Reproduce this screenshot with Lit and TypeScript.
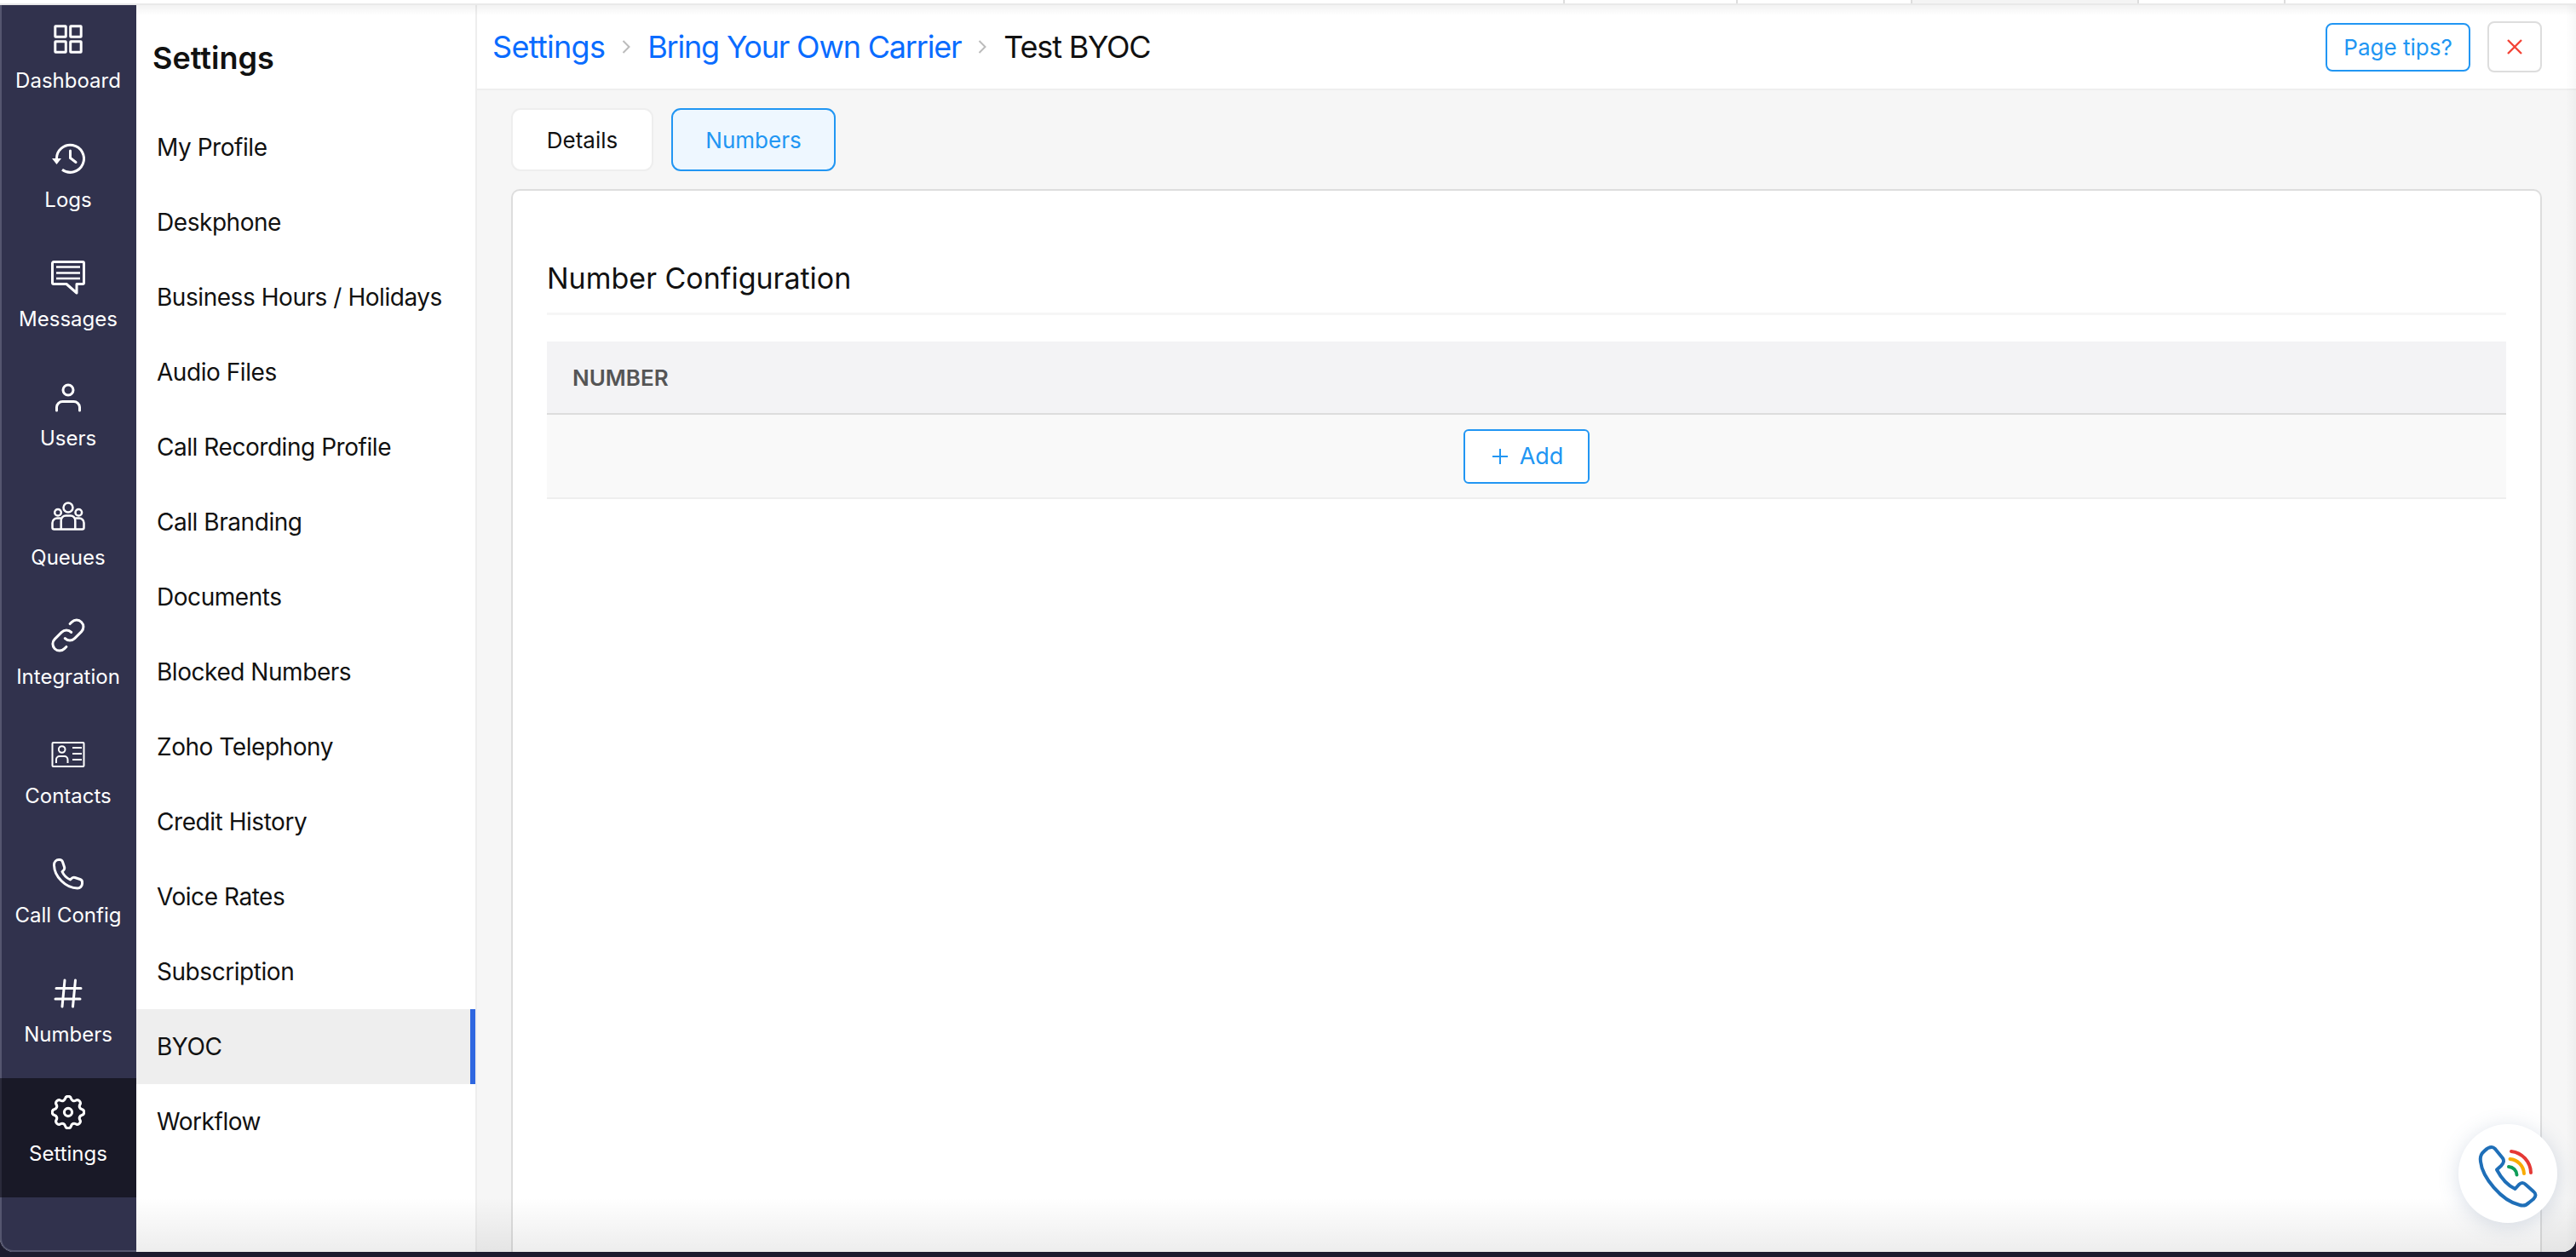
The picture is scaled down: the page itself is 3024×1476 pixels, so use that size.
import { LitElement, html, css, svg } from "lit";
import { customElement } from "lit/decorators.js";
import { classMap } from "lit/directives/class-map.js";

const railIcons = {
  dashboard: svg`<svg viewBox="0 0 40 40" fill="none" stroke="#fff" stroke-width="3">
    <rect x="4.8" y="4.8" width="12.5" height="12.5" rx=".5" /><rect x="22.7" y="4.8" width="12.5" height="12.5" rx=".5" />
    <rect x="4.8" y="22.7" width="12.5" height="12.5" rx=".5" /><rect x="22.7" y="22.7" width="12.5" height="12.5" rx=".5" />
  </svg>`,
  logs: svg`<svg viewBox="0 0 40 40" fill="none" stroke="#fff" stroke-width="3">
    <path d="M6.5 21A16 16 0 1 1 13 33.2" /><path d="M22.5 11v8.5l6.5 5" stroke-linecap="round" />
    <path d="M1 20h11l-5.5 7z" fill="#fff" stroke="none" />
  </svg>`,
  messages: svg`<svg viewBox="0 0 40 40" fill="none" stroke="#fff" stroke-width="3" stroke-linejoin="round">
    <path d="M3 1.5h34a1.5 1.5 0 0 1 1.5 1.5v23a1.5 1.5 0 0 1-1.5 1.5h-7V38L18 27.500H3A1.500 1.500 0 0 1 1.500 26V3A1.500 1.500 0 0 1 3 1.500z" />
    <path d="M6 7.500h28M6 14.500h28M6 21h28" stroke-width="2.400" />
  </svg>`,
  users: svg`<svg viewBox="0 0 40 40" fill="none" stroke="#fff" stroke-width="3" stroke-linecap="round">
    <circle cx="20" cy="12" r="6" /><path d="M6.500 36v-4a7 7 0 0 1 7-6.500h13a7 7 0 0 1 7 6.500v4" />
  </svg>`,
  queues: svg`<svg viewBox="0 0 40 40" fill="none" stroke="#fff" stroke-width="2.500">
    <circle cx="20" cy="10" r="5.500" /><circle cx="8" cy="15.700" r="3.800" /><circle cx="32.300" cy="15.700" r="3.800" />
    <path d="M11.700 35.500V25a5.500 5.500 0 0 1 5.500-5.500h5.600a5.500 5.500 0 0 1 5.500 5.500v10.500" />
    <path d="M11.700 22.500H7A5.500 5.500 0 0 0 1.500 28v5.500a2 2 0 0 0 2 2h33a2 2 0 0 0 2-2V28a5.500 5.500 0 0 0-5.500-5.500h-4.700" />
  </svg>`,
  integration: svg`<svg viewBox="2 2 20 20" fill="none" stroke="#fff" stroke-width="1.500" stroke-linecap="round" stroke-linejoin="round">
    <path d="M13.828 10.172a4 4 0 0 0-5.656 0l-4 4a4 4 0 1 0 5.656 5.656l1.102-1.101m-.758-4.899a4 4 0 0 0 5.656 0l4-4a4 4 0 0 0-5.656-5.656l-1.100 1.100" />
  </svg>`,
  contacts: svg`<svg viewBox="0 0 40 40" fill="none" stroke="#fff" stroke-width="2">
    <rect x="1.500" y="6" width="37" height="28" rx="1" />
    <circle cx="12.700" cy="14" r="3.800" /><path d="M6 30v-4a4 4 0 0 1 4-4h5.500a4 4 0 0 1 4 4v4" />
    <path d="M25 12h11M25 19h11M25 26h11" />
  </svg>`,
  callConfig: svg`<svg viewBox="0 0 40 40" fill="none" stroke="#fff" stroke-width="3" stroke-linejoin="round">
    <path d="M9 3.500C6 3.500 3.500 6 3.500 9.500 3.500 23 17 37 31 37c3 0 5.500-2.500 5.500-5.500v-2c0-1.500-1-2.500-2.500-3l-6-2c-1.500-.5-3 0-4 1L22.500 27C18 25 15 22 13 17.500l1.500-1.500c1-1 1.500-2.500 1-4l-2-6c-.5-1.500-2-2.500-3.500-2.500z" />
  </svg>`,
  numbers: svg`<svg viewBox="0 0 40 40" fill="none" stroke="#fff" stroke-width="3" stroke-linecap="round">
    <path d="M6 14.500h29M5 27h29M16 5l-3 31M28.500 5l-3 31" />
  </svg>`,
  settings: svg`<svg viewBox="2.400 2.400 19.200 19.200" fill="none" stroke="#fff" stroke-width="1.500" stroke-linecap="round" stroke-linejoin="round">
    <path d="M10.325 4.317c.426-1.756 2.924-1.756 3.350 0a1.724 1.724 0 0 0 2.573 1.066c1.543-.94 3.310.826 2.370 2.370a1.724 1.724 0 0 0 1.065 2.572c1.756.426 1.756 2.924 0 3.350a1.724 1.724 0 0 0-1.066 2.573c.94 1.543-.826 3.310-2.370 2.370a1.724 1.724 0 0 0-2.572 1.065c-.426 1.756-2.924 1.756-3.350 0a1.724 1.724 0 0 0-2.573-1.066c-1.543.94-3.310-.826-2.370-2.370a1.724 1.724 0 0 0-1.065-2.572c-1.756-.426-1.756-2.924 0-3.350a1.724 1.724 0 0 0 1.066-2.573c-.94-1.543.826-3.310 2.370-2.370.996.608 2.296.07 2.572-1.065z" />
    <circle cx="12" cy="12" r="2.200" />
  </svg>`,
};

const railItems = [
  { label: "Dashboard", icon: railIcons.dashboard },
  { label: "Logs", icon: railIcons.logs },
  { label: "Messages", icon: railIcons.messages },
  { label: "Users", icon: railIcons.users },
  { label: "Queues", icon: railIcons.queues },
  { label: "Integration", icon: railIcons.integration },
  { label: "Contacts", icon: railIcons.contacts },
  { label: "Call Config", icon: railIcons.callConfig },
  { label: "Numbers", icon: railIcons.numbers },
  { label: "Settings", icon: railIcons.settings, active: true },
];

const menuItems = [
  "My Profile",
  "Deskphone",
  "Business Hours / Holidays",
  "Audio Files",
  "Call Recording Profile",
  "Call Branding",
  "Documents",
  "Blocked Numbers",
  "Zoho Telephony",
  "Credit History",
  "Voice Rates",
  "Subscription",
  "BYOC",
  "Workflow",
];

// widths of the browser tabs peeking in at the very top
const topTabs = [1837, 203, 205, 266, 172, 341];

const chevron = svg`<svg class="chevron" viewBox="0 0 10 16" fill="none" stroke="#bbb" stroke-width="2"><path d="M1.500 1l7 7-7 7" /></svg>`;

@customElement("app-root")
export class AppRoot extends LitElement {
  static styles = css`
    :host {
      display: block;
      width: 3024px;
      height: 1476px;
      overflow: hidden;
      background: #1c1b2e;
      font-family: Inter, "Noto Sans", sans-serif;
      color: #111;
    }
    .top-strip {
      display: flex;
      height: 4px;
      background: #fff;
      border-bottom: 2px solid #e9e9e9;
    }
    .top-tab {
      flex: none;
      border-right: 2px solid #ddd;
      box-sizing: border-box;
    }
    .top-tab.shaded {
      background: #f4f4f4;
    }
    .top-tab.last {
      flex: 1;
      border-right: none;
    }
    .window {
      position: relative;
      display: flex;
      height: 1464px;
      overflow: hidden;
      border-bottom-left-radius: 16px;
      border-bottom-right-radius: 16px;
      background: #fff;
    }
    .rail {
      flex: none;
      width: 160px;
      background: #31324d;
      box-shadow: inset 2px 0 0 #55566f, inset 0 -2px 0 #55566f;
      border-bottom-left-radius: 16px;
    }
    .rail-item {
      display: flex;
      flex-direction: column;
      align-items: center;
      box-sizing: border-box;
      height: 140px;
      padding-top: 20px;
      color: #fff;
      font-size: 24px;
      line-height: 30px;
    }
    .rail-item.active {
      background: #191927;
      box-shadow: inset 2px 0 0 #2a2a3a;
    }
    .rail-icon {
      width: 40px;
      height: 40px;
      margin-bottom: 14px;
    }
    .rail-icon svg {
      display: block;
      width: 40px;
      height: 40px;
    }
    .panel {
      flex: none;
      width: 398px;
      border-right: 2px solid #eeeeee;
      background: #fff;
    }
    .panel-title {
      height: 123px;
      box-sizing: border-box;
      padding: 42px 0 0 19px;
      font-size: 36px;
      font-weight: 600;
      line-height: 40px;
    }
    .menu-item {
      display: flex;
      align-items: center;
      box-sizing: border-box;
      height: 88px;
      padding-left: 24px;
      font-size: 28px;
      letter-spacing: -0.45px;
    }
    .menu-item.active {
      background: #eeeeee;
      border-right: 6px solid #2f67e0;
    }
    .main {
      flex: 1;
      display: flex;
      flex-direction: column;
      min-width: 0;
      background: #f6f6f6;
    }
    .header {
      flex: none;
      display: flex;
      align-items: center;
      height: 98px;
      padding: 0 40px 0 18px;
      background: #fff;
      border-bottom: 2px solid #eeeeee;
    }
    .crumbs {
      flex: 1;
      display: flex;
      align-items: center;
      gap: 20px;
      font-size: 36px;
      letter-spacing: -1.2px;
    }
    .crumbs a {
      color: #0a6cff;
    }
    .crumbs a:first-child {
      letter-spacing: -0.7px;
    }
    .chevron {
      width: 10px;
      height: 16px;
    }
    .tips {
      box-sizing: border-box;
      height: 57px;
      width: 170px;
      display: flex;
      align-items: center;
      justify-content: center;
      border: 2px solid #2196f3;
      border-radius: 8px;
      color: #2196f3;
      font-size: 26px;
    }
    .close {
      box-sizing: border-box;
      display: flex;
      align-items: center;
      justify-content: center;
      width: 64px;
      height: 60px;
      margin-left: 20px;
      border: 2px solid #dddddd;
      border-radius: 8px;
      background: #fff;
    }
    .close svg {
      width: 18px;
      height: 18px;
    }
    .content {
      flex: 1;
      display: flex;
      flex-direction: column;
      gap: 21px;
      padding: 21px 40px 0 40px;
      min-height: 0;
    }
    .tabs {
      display: flex;
      gap: 21px;
    }
    .tab {
      box-sizing: border-box;
      display: flex;
      align-items: center;
      justify-content: center;
      height: 74px;
      width: 167px;
      border: 2px solid #eeeeee;
      border-radius: 11px;
      background: #fff;
      font-size: 26px;
    }
    .tab.active {
      width: 193px;
      border-color: #2196f3;
      background: #eef7ff;
      color: #2196f3;
    }
    .card {
      flex: 1;
      box-sizing: border-box;
      padding: 83px 40px 0 40px;
      background: #fff;
      border: 2px solid #dddddd;
      border-bottom: none;
      border-radius: 10px 10px 0 0;
    }
    .card-title {
      height: 60px;
      font-size: 34px;
      line-height: 40px;
      border-bottom: 3px solid #f6f6f6;
      box-sizing: content-box;
    }
    .table {
      margin-top: 31px;
    }
    .table-head {
      display: flex;
      align-items: center;
      height: 84px;
      padding-left: 30px;
      background: #f3f3f5;
      border-bottom: 2px solid #dddddd;
      color: #555;
      font-size: 26px;
      font-weight: 600;
    }
    .table-row {
      display: flex;
      align-items: center;
      justify-content: center;
      height: 97px;
      background: #f9f9f9;
      border-bottom: 2px solid #eeeeee;
    }
    .add {
      box-sizing: border-box;
      display: flex;
      align-items: center;
      justify-content: center;
      gap: 13px;
      width: 148px;
      height: 64px;
      padding-left: 2px;
      border: 2px solid #2196f3;
      border-radius: 6px;
      background: #fff;
      color: #2196f3;
      font-size: 27px;
    }
    .add svg {
      width: 20px;
      height: 20px;
    }
    .top-shade {
      position: absolute;
      left: 160px;
      right: 0;
      top: 0;
      height: 12px;
      background: linear-gradient(rgba(0, 0, 0, 0.05), rgba(0, 0, 0, 0));
      pointer-events: none;
    }
    .bottom-shade {
      position: absolute;
      left: 160px;
      right: 0;
      bottom: 0;
      height: 64px;
      background: linear-gradient(rgba(0, 0, 0, 0), rgba(0, 0, 0, 0.07));
      pointer-events: none;
    }
    .right-shade {
      position: absolute;
      top: 0;
      right: 0;
      bottom: 0;
      width: 12px;
      background: linear-gradient(90deg, rgba(0, 0, 0, 0), rgba(0, 0, 0, 0.03));
      pointer-events: none;
    }
    .phone-widget {
      position: absolute;
      left: 2886px;
      top: 1314px;
      width: 116px;
      height: 116px;
      border-radius: 50%;
      background: #fff;
      box-shadow: 0 4px 24px rgba(80, 110, 150, 0.22);
    }
    .phone-widget svg {
      display: block;
      width: 116px;
      height: 116px;
    }
  `;

  render() {
    return html`
      <div class="top-strip">
        ${topTabs.map(
          (w, i) => html`<div
            class=${classMap({ "top-tab": true, shaded: i === 3, last: i === topTabs.length - 1 })}
            style="width: ${w}px"
          ></div>`
        )}
      </div>
      <div class="window">
        <nav class="rail">
          ${railItems.map(
            (item) => html`
              <div class=${classMap({ "rail-item": true, active: !!item.active })}>
                <div class="rail-icon">${item.icon}</div>
                <span>${item.label}</span>
              </div>
            `
          )}
        </nav>
        <aside class="panel">
          <div class="panel-title">Settings</div>
          ${menuItems.map(
            (item) => html`<div class=${classMap({ "menu-item": true, active: item === "BYOC" })}>${item}</div>`
          )}
        </aside>
        <main class="main">
          <header class="header">
            <div class="crumbs">
              <a>Settings</a>
              ${chevron}
              <a>Bring Your Own Carrier</a>
              ${chevron}
              <span>Test BYOC</span>
            </div>
            <div class="tips">Page tips?</div>
            <div class="close">
              <svg viewBox="0 0 18 18" fill="none" stroke="#f44336" stroke-width="2.400"><path d="M1 1l16 16M17 1L1 17" /></svg>
            </div>
          </header>
          <div class="content">
            <div class="tabs">
              <div class="tab">Details</div>
              <div class="tab active">Numbers</div>
            </div>
            <section class="card">
              <div class="card-title">Number Configuration</div>
              <div class="table">
                <div class="table-head">NUMBER</div>
                <div class="table-row">
                  <div class="add">
                    <svg viewBox="0 0 20 20" fill="none" stroke="#2196f3" stroke-width="2"><path d="M10 1v18M1 10h18" /></svg>
                    <span>Add</span>
                  </div>
                </div>
              </div>
            </section>
          </div>
        </main>
        <div class="top-shade"></div>
        <div class="bottom-shade"></div>
        <div class="right-shade"></div>
        <div class="phone-widget">
          <svg viewBox="0 0 116 116" fill="none" stroke-width="4" stroke-linecap="round" stroke-linejoin="round">
            <path stroke="#1f6fb8" d="M39 27q-4 0-8 4l-3 3q-3 4-2 10C28 62 50 90 72 95q6 2 11-3l5-4q5-5 0-9l-9-8q-4-4-8 0l-4.500 5C58 72 50 63 45 53.500l5-4.500q5-5 2-9L43 29q-2-2-4-2z" />
            <path stroke="#e53935" d="M62 32A26 26 0 0 1 85 57" />
            <path stroke="#f9ab00" d="M60.500 41A18 18 0 0 1 77 58" />
            <path stroke="#0f9d58" d="M59 50a10 10 0 0 1 9.500 9.500" />
          </svg>
        </div>
      </div>
    `;
  }
}
